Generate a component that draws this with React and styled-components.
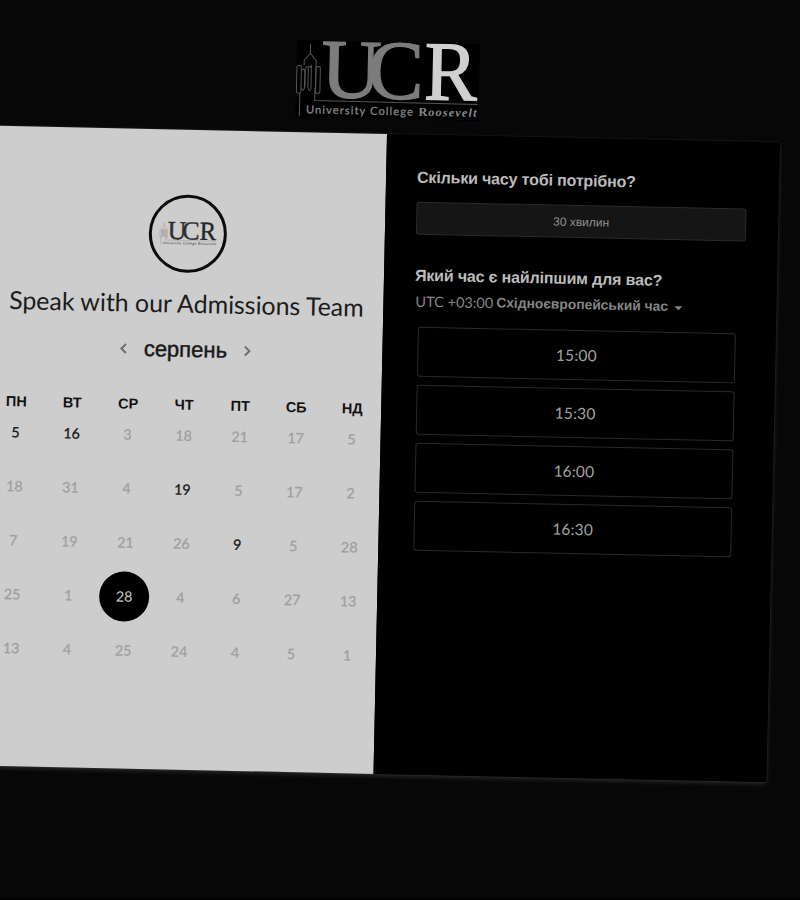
import React from "react";
import styled, { createGlobalStyle } from "styled-components";

const GlobalStyle = createGlobalStyle`
  *, *::before, *::after { box-sizing: border-box; }
  body { margin: 0; background: #070707; overflow: hidden; }
  button { font: inherit; color: inherit; background: none; border: 0; padding: 0; }
`;

const humanist = `Lato, "Liberation Sans", sans-serif`;
const grotesk = `"Liberation Sans", sans-serif`;

const Page = styled.main`
  width: 800px;
  height: 900px;
  overflow: hidden;
  background: #070707;
  border-bottom: 3px solid #020202;
  font-family: ${humanist};
`;

const Scene = styled.div`
  width: 788px;
  margin-left: -8px;
  transform: rotate(1.21deg);
  transform-origin: 394px 134px;
`;

const Header = styled.header`
  height: 134px;
  padding: 42px 0 0 303px;
`;

const Card = styled.section`
  display: grid;
  grid-template-columns: 394.5px 393.5px;
  height: 640px;
  border-radius: 3px;
  box-shadow: 0 2px 5px rgba(255, 255, 255, 0.14), 0 0 2px rgba(255, 255, 255, 0.12);
`;

const CalendarPanel = styled.div`
  display: flex;
  flex-direction: column;
  align-items: center;
  padding: 65px 0 0 1.5px;
  background: #cdcdcd;
`;

const BookingPanel = styled.div`
  padding: 31px 31.5px 0;
  background: #000;
  border-radius: 0 3px 3px 0;
`;

const Avatar = styled.div`
  display: flex;
  align-items: center;
  justify-content: center;
  width: 78px;
  height: 78px;
  border: 3px solid #0b0b0b;
  border-radius: 50%;
`;

const Title = styled.h1`
  margin: 13px 0 0;
  font-size: 25px;
  line-height: 34px;
  font-weight: 400;
  letter-spacing: -0.05px;
  white-space: nowrap;
  color: #1c1c1c;
`;

const MonthBar = styled.div`
  display: flex;
  align-items: center;
  justify-content: center;
  gap: 16px;
  height: 30px;
  margin-top: 15px;
`;

const MonthName = styled.h2`
  margin: 0;
  font: 400 22px/30px ${grotesk};
  color: #191919;
  -webkit-text-stroke: 0.45px #191919;
`;

const ArrowButton = styled.button`
  display: flex;
  color: #6e6e6e;
`;

const Weekdays = styled.div`
  display: grid;
  grid-template-columns: repeat(7, 56px);
  margin-top: 34px;
  height: 12px;
  font: 700 14.5px/12px ${grotesk};
  text-align: center;
  color: #131313;
`;

const Days = styled.div`
  display: grid;
  grid-template-columns: repeat(7, 56px);
  grid-auto-rows: 50px;
  row-gap: 4px;
  justify-items: center;
`;

const dayColors = { muted: "#a0a0a0", open: "#181818", selected: "#c8c8c8" };

const Day = styled.button`
  width: 50px;
  height: 50px;
  border-radius: 50%;
  font-size: 14.3px;
  line-height: 50px;
  text-align: center;
  -webkit-text-stroke: ${(p) => (p.$state === "selected" ? "0" : "0.3px")} currentColor;
  color: ${(p) => dayColors[p.$state]};
  background: ${(p) => (p.$state === "selected" ? "#000" : "transparent")};
`;

const Question = styled.h3`
  margin: ${(p) => (p.$spaced ? "29px" : "0")} 0 0;
  font: 700 16px/24px ${grotesk};
  letter-spacing: -0.16px;
  white-space: nowrap;
  color: #bcbcbc;
`;

const Duration = styled.button`
  display: block;
  width: 330px;
  height: 33px;
  margin-top: 12px;
  border: 1px solid #2a2a2a;
  border-radius: 3px;
  background: #151515;
  font: 400 12px/33px ${grotesk};
  color: #909090;
`;

const Timezone = styled.button`
  display: flex;
  align-items: center;
  gap: 3px;
  height: 24px;
  margin: 2px 0 0 1px;
  white-space: nowrap;
  color: #858585;
`;

const Offset = styled.span`
  font: 400 14.5px/24px ${humanist};
`;

const Zone = styled.span`
  font: 700 13.8px/24px ${grotesk};
`;

const Caret = styled.span`
  margin: 2px 0 0 3px;
  border: 4px solid transparent;
  border-top-color: #858585;
  border-bottom: 0;
`;

const Slots = styled.div`
  display: grid;
  grid-auto-rows: 50px;
  row-gap: 8.1px;
  width: 318px;
  margin: 13px 0 0 4px;
`;

const Slot = styled.button`
  border: 1px solid #292929;
  border-radius: 3px;
  font-size: 15.5px;
  letter-spacing: 0.2px;
  color: #a2a2a2;
`;

const LogoSvg = styled.svg`
  display: block;
  overflow: visible;
  background: ${(p) => (p.$dark ? "#000" : "transparent")};
`;

function Logo({ width, dark }) {
  const tone = dark
    ? { uc: "#7c7c7c", r: "#d0d0d0", line: "#555", text: "#8a8a8a" }
    : { uc: "#303030", r: "#262626", line: "#777", text: "#555" };
  return (
    <LogoSvg $dark={dark} width={width} viewBox="0 0 183 77" aria-label="University College Roosevelt">
      <g fill="none" stroke={tone.line} strokeWidth="1">
        <path d="M13.7 3v10l-6 7v5m6-12l6 7v28M4 53v23M19 47v13l163 0.500" />
        <rect x="0.500" y="25" width="4.500" height="28" rx="2" />
        <path d="M5.500 30q3-3 3 2v16q-2 4-3 0M9 46V29q1-4 3-2v21q2 4 3 0V28q-2-4-3 0M15 28v-4" />
        <rect x="19.500" y="26" width="4.500" height="27" rx="2" />
      </g>
      <g fontFamily='"Liberation Serif", serif' fontSize="84" strokeWidth="1.3">
        <text x="25" y="56.500" fill={tone.uc} stroke={tone.uc} textLength="60" lengthAdjust="spacingAndGlyphs">U</text>
        <text x="71.500" y="56.500" fill={tone.uc} stroke={tone.uc}>C</text>
        <text x="128" y="56.500" fill={tone.r} stroke={tone.r} textLength="53" lengthAdjust="spacingAndGlyphs">R</text>
      </g>
      <text x="10.500" y="73" fill={tone.text} fontFamily={humanist} fontSize="11" fontWeight="400" stroke={tone.text} strokeWidth="0.250" textLength="107">
        University College
      </text>
      <text x="123" y="73" fill={tone.text} fontFamily='"Liberation Serif", serif' fontSize="12" fontWeight="700" textLength="58">
        R<tspan fontStyle="italic">oosevelt</tspan>
      </text>
    </LogoSvg>
  );
}

function Chevron({ direction }) {
  return (
    <svg width="8" height="12" viewBox="0 0 8 12" fill="none" stroke="currentColor" strokeWidth="2">
      <path d={direction === "left" ? "M6.500 1.500L2 6l4.500 4.500" : "M1.500 1.500L6 6l-4.500 4.500"} />
    </svg>
  );
}

const weekdays = ["ПН", "ВТ", "СР", "ЧТ", "ПТ", "СБ", "НД"];
const days = [
  5, 16, 3, 18, 21, 17, 5,
  18, 31, 4, 19, 5, 17, 2,
  7, 19, 21, 26, 9, 5, 28,
  25, 1, 28, 4, 6, 27, 13,
  13, 4, 25, 24, 4, 5, 1,
];
const openDays = new Set([0, 1, 10, 18]);
const selectedDay = 23;
const slots = ["15:00", "15:30", "16:00", "16:30"];

const dayState = (i) => (i === selectedDay ? "selected" : openDays.has(i) ? "open" : "muted");

export default function App() {
  return (
    <Page>
      <GlobalStyle />
      <Scene>
        <Header>
          <Logo width={183} dark />
        </Header>
        <Card>
          <CalendarPanel>
            <Avatar>
              <Logo width={57} />
            </Avatar>
            <Title>Speak with our Admissions Team</Title>
            <MonthBar>
              <ArrowButton aria-label="Попередній місяць"><Chevron direction="left" /></ArrowButton>
              <MonthName>серпень</MonthName>
              <ArrowButton aria-label="Наступний місяць"><Chevron direction="right" /></ArrowButton>
            </MonthBar>
            <Weekdays>
              {weekdays.map((d) => <span key={d}>{d}</span>)}
            </Weekdays>
            <Days>
              {days.map((d, i) => <Day key={i} $state={dayState(i)}>{d}</Day>)}
            </Days>
          </CalendarPanel>
          <BookingPanel>
            <Question>Скільки часу тобі потрібно?</Question>
            <Duration>30 хвилин</Duration>
            <Question $spaced>Який час є найліпшим для вас?</Question>
            <Timezone>
              <Offset>UTC +03:00</Offset>
              <Zone>Східноєвропейський час</Zone>
              <Caret />
            </Timezone>
            <Slots>
              {slots.map((s) => <Slot key={s}>{s}</Slot>)}
            </Slots>
          </BookingPanel>
        </Card>
      </Scene>
    </Page>
  );
}
